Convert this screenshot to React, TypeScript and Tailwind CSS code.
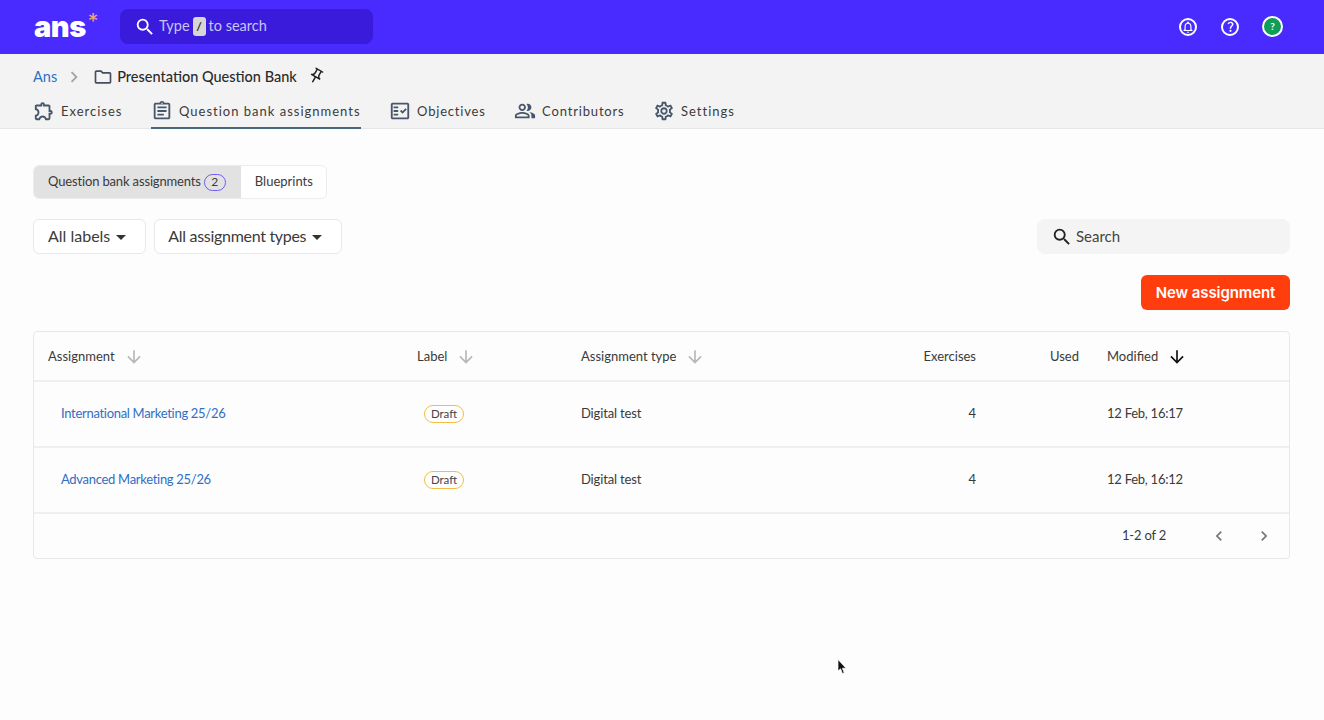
import React from 'react';
import {
  MdSearch,
  MdOutlineExtension,
  MdOutlineAssignment,
  MdOutlineFactCheck,
  MdOutlinePeopleAlt,
  MdOutlineSettings,
  MdOutlineFolder,
  MdOutlinePushPin,
  MdOutlineNotifications,
  MdQuestionMark,
  MdArrowDownward,
  MdArrowDropDown,
  MdChevronLeft,
  MdChevronRight,
} from 'react-icons/md';

const tabs = [
  { label: 'Exercises', icon: MdOutlineExtension, spacing: 'tracking-[1px]' },
  { label: 'Question bank assignments', icon: MdOutlineAssignment, spacing: 'tracking-[1px]', active: true },
  { label: 'Objectives', icon: MdOutlineFactCheck, spacing: 'tracking-[0.8px]' },
  { label: 'Contributors', icon: MdOutlinePeopleAlt, spacing: 'tracking-[0.83px]' },
  { label: 'Settings', icon: MdOutlineSettings, spacing: 'tracking-[1px]' },
];

const rows = [
  { name: 'International Marketing 25/26', modified: '12 Feb, 16:17' },
  { name: 'Advanced Marketing 25/26', modified: '12 Feb, 16:12' },
];

function SortHead({ label }: { label: string }) {
  return (
    <div className="flex items-center gap-[9px]">
      <span>{label}</span>
      <MdArrowDownward size={20} className="text-[#b8b8b8]" />
    </div>
  );
}

function Filter({ label, className }: { label: string; className: string }) {
  return (
    <button className={`h-[35px] flex items-center pr-[12px] bg-white border border-[#e8e8e8] rounded-[6px] text-[16px] text-[#3a3a3a] ${className}`}>
      <span className="pb-[1px]">{label}</span>
      <MdArrowDropDown size={24} className="text-[#333] -ml-px" />
    </button>
  );
}

export default function App() {
  return (
    <div className="relative h-[720px] overflow-hidden bg-[#fdfdfd] text-[#3a3a3a] font-['Lato',sans-serif]">
      <header className="h-[54px] bg-[#4a2bff] flex items-center pl-[34px] pr-[41px] pb-[1px]">
        <div className="w-[86px] flex items-start text-white font-['Inter',sans-serif] font-black text-[29px] leading-none tracking-[-0.5px]">
          ans<span className="text-[#f5a27f] font-normal text-[21px] ml-[2px] -mt-[1px]">*</span>
        </div>
        <div className="h-[35px] w-[253px] rounded-[8px] bg-[#3a1bdc] flex items-center pl-[14px] text-[14.5px] text-[#c9c4f5]">
          <MdSearch size={22} className="text-white mr-[3px]" />
          <span className="pb-[1px]">Type</span>
          <span className="mx-[3px] h-[19px] w-[13px] rounded-[3px] bg-[#d6d6d6] text-[#333] text-[12px] font-bold flex items-center justify-center">/</span>
          <span className="pb-[1px]">to search</span>
        </div>
        <div className="ml-auto flex items-center gap-[24px]">
          <span className="w-[18px] h-[18px] rounded-full border-2 border-white flex items-center justify-center text-white">
            <MdOutlineNotifications size={14} />
          </span>
          <span className="w-[18px] h-[18px] rounded-full border-2 border-white flex items-center justify-center text-white">
            <MdQuestionMark size={13} />
          </span>
          <span className="-ml-px w-[21px] h-[21px] rounded-full border-2 border-white bg-[#0f9d58] flex items-center justify-center text-white text-[10px] font-bold">?</span>
        </div>
      </header>

      <div className="h-[75px] bg-[#f3f3f3] border-b border-[#e6e6e6] px-[33px]">
        <div className="h-[47px] flex items-center text-[14.5px] pb-[1px]">
          <a className="text-[#2f6fc4]">Ans</a>
          <MdChevronRight size={22} className="text-[#a3a3a3] ml-[6px] mr-[8px]" />
          <MdOutlineFolder size={20} className="text-[#45505c] mr-[4px]" />
          <span className="font-medium text-[#2b2b2b]">Presentation Question Bank</span>
          <MdOutlinePushPin size={18} className="ml-[10px] -mt-[3px] rotate-[30deg] text-[#222]" />
        </div>
        <nav className="flex gap-[28.5px]">
          {tabs.map((t) => {
            const Icon = t.icon;
            return (
              <div
                key={t.label}
                className={`h-[28px] flex items-start gap-[6px] text-[13px] text-[#3b3b3b] ${t.spacing} ${t.active ? 'border-b-2 border-[#47677f]' : ''}`}
              >
                <Icon size={22} className="text-[#47566a] -mt-[1px]" />
                <span className="leading-[20px]">{t.label}</span>
              </div>
            );
          })}
        </nav>
      </div>

      <main className="pl-[33px] pr-[34px] pt-[36px]">
        <div className="inline-flex h-[34px] rounded-[6px] border border-[#ececec] overflow-hidden text-[13px]">
          <div className="bg-[#e2e2e2] pl-[14px] pr-[15px] flex items-center gap-[3px]">
            <span className="tracking-[-0.15px] pb-[1px]">Question bank assignments</span>
            <span className="w-[22px] h-[17px] rounded-full border border-[#6f5cf0] flex items-center justify-center text-[12px]">2</span>
          </div>
          <div className="bg-white pl-[14px] pr-[13px] flex items-center pb-[1px]">Blueprints</div>
        </div>

        <div className="mt-[20px] flex items-center gap-[8px]">
          <Filter label="All labels" className="pl-[14px]" />
          <Filter label="All assignment types" className="pl-[13px] tracking-[-0.3px]" />
          <div className="ml-auto w-[253px] h-[35px] bg-[#f4f4f4] rounded-[8px] flex items-center pl-[14px] gap-[3px] text-[15px] text-[#444]">
            <MdSearch size={22} className="text-[#222]" />
            <span className="pb-[1px]">Search</span>
          </div>
        </div>

        <div className="mt-[21px] flex justify-end">
          <button className="h-[35px] w-[149px] pt-[1px] rounded-[6px] bg-[#ff3d0d] text-white text-[15px] tracking-[-0.1px] font-semibold font-['Inter',sans-serif]">
            New assignment
          </button>
        </div>

        <div className="mt-[21px] rounded-[4px] border border-[#e8e8e8] bg-[#fdfdfd] text-[13px]">
          <table className="w-full table-fixed border-collapse">
            <thead>
              <tr className="h-[49px] border-b-2 border-[#efefef]">
                <th className="w-[369px] px-[14px] pt-[2px] text-left font-normal"><SortHead label="Assignment" /></th>
                <th className="w-[164px] px-[14px] pt-[2px] text-left font-normal"><SortHead label="Label" /></th>
                <th className="px-[14px] pt-[2px] text-left font-normal"><SortHead label="Assignment type" /></th>
                <th className="w-[110px] px-[14px] pt-[2px] text-right font-normal">Exercises</th>
                <th className="w-[103px] px-[14px] pt-[2px] text-right font-normal">Used</th>
                <th className="w-[196px] px-[14px] pt-[2px] text-left font-normal">
                  <div className="flex items-center gap-[9px]">
                    Modified
                    <MdArrowDownward size={20} className="text-[#111]" />
                  </div>
                </th>
              </tr>
            </thead>
            <tbody>
              {rows.map((r) => (
                <tr key={r.name} className="h-[66px] border-b-2 border-[#efefef]">
                  <td className="pl-[27px] pb-[1px] text-[#2f6fc4] tracking-[-0.3px]">{r.name}</td>
                  <td className="pl-[21px]">
                    <span className="inline-flex items-center justify-center w-[40px] h-[18px] rounded-full border-[1.5px] border-[#f4bd45] bg-white text-[11.5px] text-[#444]">Draft</span>
                  </td>
                  <td className="px-[14px] pb-[1px] tracking-[-0.15px]">Digital test</td>
                  <td className="px-[14px] pb-[1px] text-right">4</td>
                  <td className="px-[14px]"></td>
                  <td className="px-[14px] pb-[1px] tracking-[-0.25px]">{r.modified}</td>
                </tr>
              ))}
            </tbody>
          </table>
          <div className="h-[44px] flex items-center justify-end pr-[15px]">
            <span className="pb-[1px] tracking-[-0.2px]">1-2 of 2</span>
            <MdChevronLeft size={20} className="ml-[43px] text-[#777]" />
            <MdChevronRight size={20} className="ml-[25px] text-[#777]" />
          </div>
        </div>
      </main>

      {/* mouse pointer in the recording */}
      <svg className="absolute left-[837px] top-[659px]" width="10" height="16" viewBox="0 0 10 16">
        <path d="M1 0.5 V12 L3.6 9.8 L5.4 14.5 L7.2 13.7 L5.4 9.2 H9 Z" fill="#111" stroke="#fff" strokeWidth="0.7" />
      </svg>
    </div>
  );
}
